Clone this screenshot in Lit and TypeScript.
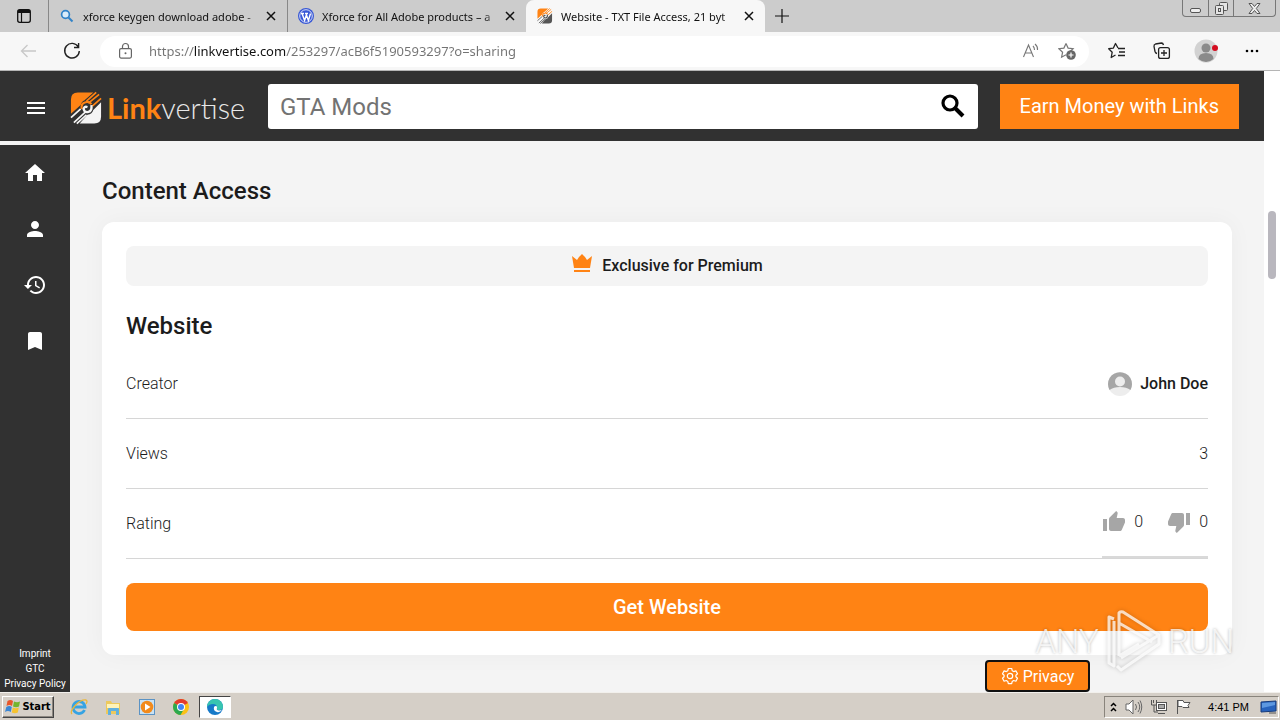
import { LitElement, html, css, svg } from "lit";
import { customElement, property } from "lit/decorators.js";

const linkMark = (light: string) => svg`
  <path fill="#ff8314" d="M8 1h16L15 9q-3 1-4 5L1 23V8q0-7 7-7z"/>
  <path fill=${light} d="M32 11v15q0 7-7 7H10l8-9q5-1 6-5z"/>
  <path d="M1 27l10-9M4 32l12-11M7 33l10-9" stroke=${light} stroke-width="1.800" fill="none"/>
  <path d="M27 1l-10 9M30 3L19 12M32 7l-9 8" stroke="#ff8314" stroke-width="1.800" fill="none"/>
  <path d="M12 18q-1-6 4-7 4-1 6 2" stroke="#ff8314" stroke-width="2.200" fill="none"/>
  <path d="M22 14q1 6-3 7-4 1-5-3 1-3 4-2" stroke=${light} stroke-width="2.400" fill="none"/>`;

@customElement("browser-tabs")
class BrowserTabs extends LitElement {
  static styles = css`
    :host { display: flex; height: 32px; background: #ccc; font: 11px "Noto Sans", sans-serif; color: #111; }
    button { border: 0; background: none; padding: 0; margin: 0; font: inherit; color: inherit; display: flex; align-items: center; justify-content: center; }
    .menu { width: 48px; }
    .strip { display: flex; }
    .tab { display: flex; align-items: center; width: 239px; box-sizing: border-box; padding: 0 6px 0 10px; border-left: 1px solid #888; gap: 8px; }
    .tab.active { background: #f7f7f7; border-color: transparent; border-radius: 8px 8px 0 0; }
    .title { flex: 1; min-width: 0; justify-content: flex-start; white-space: nowrap; height: 24px;
      -webkit-mask-image: linear-gradient(to right, #000 160px, transparent 182px); mask-image: linear-gradient(to right, #000 160px, transparent 182px); }
    .icon { width: 16px; height: 16px; flex: none; }
    .close { width: 20px; height: 20px; flex: none; }
    .add { width: 34px; }
    .win { margin: 0 4px 0 auto; display: flex; height: 17px; box-sizing: border-box; border: 1px solid #777; border-top: 0; border-radius: 0 0 4px 4px; }
    .win button { width: 25px; }
    .win button + button { border-left: 1px solid #777; }
    .win .x { width: 42px; }
  `;
  private close() {
    return html`<button class="close" aria-label="Close tab"><svg width="10" height="10" viewBox="0 0 10 10"><path d="M1 1l8 8M9 1L1 9" stroke="#111" stroke-width="1.5"/></svg></button>`;
  }
  render() {
    return html`
      <button class="menu" aria-label="Tab actions"><svg width="16" height="16" viewBox="0 0 16 16"><rect x="1.7" y="1.7" width="12.6" height="12.6" rx="2" fill="none" stroke="#111" stroke-width="1.3"/><path d="M2 2h12v3H2z" fill="#111"/><path d="M5.5 4v10" stroke="#111" stroke-width="1.2"/></svg></button>
      <div class="strip">
        <div class="tab">
          <svg class="icon" viewBox="0 0 16 16"><circle cx="6.5" cy="6.5" r="3.9" fill="#d9ecfa" stroke="#3183c8" stroke-width="1.7"/><path d="M9.5 9.5l4 4" stroke="#3183c8" stroke-width="2"/></svg>
          <button class="title">xforce keygen download adobe -</button>${this.close()}
        </div>
        <div class="tab">
          <svg class="icon" viewBox="0 0 16 16"><circle cx="8" cy="8" r="8" fill="#3858d6"/><circle cx="8" cy="8" r="6.3" fill="none" stroke="#fff" stroke-width=".8"/><path d="M3 5.5h3M7 5.5h3M4 5.5l2.6 7L8.4 7l2 5.500L12.500 5.500" stroke="#fff" stroke-width="1.400" fill="none"/></svg>
          <button class="title">Xforce for All Adobe products – a</button>${this.close()}
        </div>
        <div class="tab active">
          <svg class="icon" viewBox="0 0 34 34">${linkMark("#555")}</svg>
          <button class="title">Website - TXT File Access, 21 byt</button>${this.close()}
        </div>
      </div>
      <button class="add" aria-label="New tab"><svg width="14" height="14" viewBox="0 0 14 14"><path d="M7 0v14M0 7h14" stroke="#111" stroke-width="1.2"/></svg></button>
      <div class="win">
        <button aria-label="Minimize"><svg width="13" height="13" viewBox="0 0 13 13"><rect x="1.500" y="6.500" width="10" height="4" rx="1.500" fill="#eee" stroke="#555"/></svg></button>
        <button aria-label="Restore"><svg width="13" height="13" viewBox="0 0 13 13" fill="#e4e4e4" stroke="#555"><rect x="4.500" y=".5" width="8" height="8" rx="1"/><rect x=".5" y="3.500" width="8" height="9" rx="1"/><rect x="3.500" y="6.500" width="2" height="3"/></svg></button>
        <button class="x" aria-label="Close"><svg width="13" height="11" viewBox="0 0 13 11"><path d="M1 .5h3l2.500 3 2.500-3h3L8.300 5.500l3.700 5H9l-2.500-3-2.500 3H1l3.700-5z" fill="#eee" stroke="#555"/></svg></button>
      </div>`;
  }
}

@customElement("address-bar")
class AddressBar extends LitElement {
  static styles = css`
    :host { display: flex; align-items: center; height: 39px; box-sizing: border-box; background: #f7f7f7; border-bottom: 1px solid #b5b5b5; padding: 0 18px; }
    button { border: 0; background: none; padding: 0; display: flex; align-items: center; justify-content: center; height: 24px; width: 20px; }
    .reload { margin-left: 24px; }
    .field { flex: 1; display: flex; align-items: center; height: 31px; margin: 0 18px; padding: 0 12px 0 18px; border-radius: 16px; background: #fff; box-sizing: border-box; gap: 16px; }
    input { flex: 1; min-width: 0; border: 0; padding: 0; outline: 0; font: 13px "Noto Sans", sans-serif; height: 24px;
      background: linear-gradient(to right, #737373 45px, #111 45px, #111 137px, #737373 137px); -webkit-background-clip: text; background-clip: text; -webkit-text-fill-color: transparent; }
    .tools { display: flex; align-items: center; gap: 25px; }
  `;
  render() {
    return html`
      <button aria-label="Back"><svg width="17" height="14" viewBox="0 0 17 14"><path d="M7.500 1L1.500 7l6 6M1.500 7H16" fill="none" stroke="#c8c8c8" stroke-width="1.300"/></svg></button>
      <button class="reload" aria-label="Reload"><svg width="18" height="18" viewBox="0 0 18 18"><path d="M15.300 5A7.300 7.300 0 1 0 16.300 9M15.600 1v4.500H11" fill="none" stroke="#222" stroke-width="1.400"/></svg></button>
      <div class="field">
        <svg width="15" height="18" viewBox="0 0 15 18"><rect x="1.600" y="6.600" width="11.800" height="9.500" rx="1.500" fill="none" stroke="#666" stroke-width="1.200"/><path d="M4.500 6V4.500a3 3 0 0 1 6 0V6" fill="none" stroke="#666" stroke-width="1.200"/><circle cx="7.500" cy="11.300" r="1" fill="#666"/></svg>
        <input aria-label="Address" .value=${"https://linkvertise.com/253297/acB6f5190593297?o=sharing"} />
        <button aria-label="Read aloud"><svg width="18" height="18" viewBox="0 0 18 18"><path d="M1.500 15L6.500 3l5 12M3.200 11h6.600M11 4q1.500 1.500 1.500 4M13 2q3 2.500 2.500 6" fill="none" stroke="#777" stroke-width="1.100"/></svg></button>
        <button aria-label="Add to favorites"><svg width="19" height="19" viewBox="0 0 19 19"><path d="M8 1.500l2.100 4.600 5 .6-3.700 3.500M8 1.500L5.900 6.100l-5 .6 3.700 3.500-1 5L8 12.800" fill="none" stroke="#777" stroke-width="1.200"/><circle cx="13" cy="13" r="4.800" fill="#666"/><path d="M13 10.500v5M10.500 13h5" stroke="#fff" stroke-width="1.200"/></svg></button>
      </div>
      <div class="tools">
        <button aria-label="Favorites"><svg width="18" height="18" viewBox="0 0 18 18"><path d="M10 6L7.500 1.500 5.400 6.100l-4.700.6 3.500 3.500-1 5.300L7.500 13M10 6.500h7M11 10h6M10 13.500h7" fill="none" stroke="#222" stroke-width="1.300" stroke-linejoin="round"/></svg></button>
        <button aria-label="Collections"><svg width="18" height="18" viewBox="0 0 18 18"><path d="M4 11.500q-1.500-.3-2-2L1 4.500q-.2-2 1.500-2.500l6-1q1.500 0 2 2" fill="none" stroke="#222" stroke-width="1.300"/><rect x="5.600" y="5.600" width="10.800" height="10.800" rx="2" fill="#f7f7f7" stroke="#222" stroke-width="1.300"/><path d="M11 8v6M8 11h6" stroke="#222" stroke-width="1.300"/></svg></button>
        <button aria-label="Profile"><svg width="24" height="24" viewBox="1 0 24 24" overflow="visible"><circle cx="12" cy="12" r="11.500" fill="#d2d2d2"/><circle cx="12" cy="9" r="4.500" fill="#8a8a8a"/><path d="M4.500 20q0-6 7.500-6t7.500 6q-7.500 6-15 0z" fill="#8a8a8a"/><circle cx="21" cy="9" r="3" fill="#d40d20"/></svg></button>
        <button aria-label="Settings and more"><svg width="16" height="4" viewBox="0 0 16 4"><circle cx="3" cy="2" r="1.300"/><circle cx="8" cy="2" r="1.300"/><circle cx="13" cy="2" r="1.300"/></svg></button>
      </div>`;
  }
}

@customElement("site-header")
class SiteHeader extends LitElement {
  static styles = css`
    :host { display: flex; align-items: center; height: 70px; background: #313131; padding: 0 25px 0 24px; font-family: Roboto, sans-serif; }
    button { border: 0; padding: 0; background: none; display: flex; align-items: center; justify-content: center; font-family: inherit; }
    .menu { padding-top: 4px; }
    .logo { display: flex; align-items: center; margin: 4px 21px 0 22px; text-decoration: none; gap: 4px; font: 300 29px Lato, sans-serif; line-height: 34px; color: #e8e8e8; width: 177px; white-space: nowrap; }
    .logo b { color: #ff8314; font-weight: 700; }
    .search { flex: 1; min-width: 0; display: flex; height: 45px; box-sizing: border-box; background: #fff; border-radius: 3px; padding: 2px 11px 0 12px; }
    input { flex: 1; min-width: 0; border: 0; outline: 0; padding: 0; background: none; font: 24px Roboto, sans-serif; }
    input::placeholder { color: #737373; opacity: 1; }
    .earn { height: 45px; margin-left: 22px; padding: 0 20px; background: #ff8314; color: #fff; font-size: 20px; line-height: 24px; }
  `;
  render() {
    return html`
      <button class="menu" aria-label="Menu"><svg width="24" height="24" viewBox="0 0 24 24" fill="#fff"><path d="M3 18h18v-2H3v2zm0-5h18v-2H3v2zm0-7v2h18V6H3z"/></svg></button>
      <a class="logo" href="#" aria-label="Linkvertise"><svg width="33" height="34" viewBox="0 0 34 34">${linkMark("#f4f4f4")}</svg><span><b>Link</b>vertise</span></a>
      <form class="search" role="search">
        <input type="text" aria-label="Search" placeholder="GTA Mods" />
        <button type="button" aria-label="Search"><svg width="28" height="28" viewBox="0 0 28 28" fill="none" stroke="#000"><circle cx="11" cy="10" r="7" stroke-width="3.200"/><path d="M16 15l8 8" stroke-width="4"/></svg></button>
      </form>
      <button class="earn">Earn Money with Links</button>`;
  }
}

@customElement("side-nav")
class SideNav extends LitElement {
  static styles = css`
    :host { display: flex; flex-direction: column; width: 70px; flex: none; box-sizing: border-box; margin-top: 4px; background: #313131; font: 10px Roboto, sans-serif; }
    a { color: #fff; text-decoration: none; display: flex; justify-content: center; align-items: center; }
    .item { height: 56px; }
    .legal { margin-top: auto; line-height: 15px; padding-bottom: 1px; white-space: nowrap; }
  `;
  render() {
    const items = [
      ["Home", "M10 20v-6h4v6h5v-8h3L12 3 2 12h3v8z"],
      ["Profile", "M12 12c2.210 0 4-1.790 4-4s-1.790-4-4-4-4 1.790-4 4 1.790 4 4 4zm0 2c-2.670 0-8 1.340-8 4v2h16v-2c0-2.660-5.330-4-8-4z"],
      ["History", "M13 3c-4.970 0-9 4.030-9 9H1l3.890 3.890.07.14L9 12H6c0-3.870 3.130-7 7-7s7 3.130 7 7-3.130 7-7 7c-1.930 0-3.680-.79-4.940-2.060l-1.420 1.420C8.270 19.990 10.510 21 13 21c4.970 0 9-4.030 9-9s-4.030-9-9-9zm-1 5v5l4.280 2.540.72-1.210-3.500-2.080V8H12z"],
      ["Bookmarks", "M17 3H7c-1.100 0-1.990.9-1.990 2L5 21l7-3 7 3V5c0-1.100-.9-2-2-2z"],
    ];
    return html`
      ${items.map(([name, d]) => html`<a class="item" href="#" aria-label=${name}><svg width="24" height="24" viewBox="0 0 24 24" fill="#fff"><path d=${d} /></svg></a>`)}
      <div class="legal"><a href="#">Imprint</a><a href="#">GTC</a><a href="#">Privacy Policy</a></div>`;
  }
}

@customElement("info-row")
class InfoRow extends LitElement {
  @property() label = "";
  static styles = css`
    :host { display: flex; justify-content: space-between; align-items: center; height: 70px; box-sizing: border-box; border-bottom: 1px solid #d6d6d6; font-size: 16px; font-weight: 300; }
  `;
  render() {
    return html`<span>${this.label}</span><slot></slot>`;
  }
}

@customElement("content-access")
class ContentAccess extends LitElement {
  static styles = css`
    :host { display: block; flex: 1; min-width: 0; padding: 34px 32px; color: #1c1c1c; font-family: Roboto, sans-serif; }
    h1, h2 { margin: 0; font-size: 24px; font-weight: 500; line-height: 32px; }
    h1 { margin-bottom: 15px; }
    .card { background: #fff; border-radius: 12px; padding: 24px; box-shadow: 0 0 24px rgba(0, 0, 0, 0.04); }
    .premium { height: 40px; box-sizing: border-box; padding-bottom: 2px; border-radius: 8px; background: #f4f4f4; display: flex; align-items: center; justify-content: center; gap: 9px; font-size: 16px; font-weight: 500; }
    .premium svg { margin-bottom: 4px; }
    h2 { padding: 24px 0 7px; }
    .creator, .votes, .vote { display: flex; align-items: center; gap: 8px; }
    .creator { font-weight: 500; }
    .votes { gap: 24px; align-self: stretch; padding-bottom: 2px; border-bottom: 2px solid #d9d9d9; }
    .vote { border: 0; background: none; padding: 0; font: inherit; color: inherit; }
    .get { display: block; width: 100%; height: 48px; margin-top: 24px; border: 0; border-radius: 8px; background: #ff8314; color: #fff; font: 500 20px Roboto, sans-serif; }
  `;
  render() {
    return html`
      <h1>Content Access</h1>
      <section class="card">
        <div class="premium"><svg width="22" height="20" viewBox="0 0 22 20" fill="#ff8314"><path d="M1 3l5 4 2-3 3-3 3 3 2 3 5-4-2 12H3zM3 17h16v2H3z"/></svg>Exclusive for Premium</div>
        <h2>Website</h2>
        <info-row label="Creator"><span class="creator"><svg width="24" height="24" viewBox="0 0 24 24"><circle cx="12" cy="12" r="12" fill="#ededed"/><path d="M1.500 18a12 12 0 1 1 21 0q-4-3-10.500-3t-10.500 3z" fill="#a6a6a6"/><circle cx="12" cy="9.500" r="5" fill="#ededed"/></svg>John Doe</span></info-row>
        <info-row label="Views"><span>3</span></info-row>
        <info-row label="Rating"><span class="votes">
          <button class="vote" aria-label="Like, 0"><svg width="24" height="24" viewBox="0 0 24 24" fill="#a6a6a6"><path d="M1 21h4V9H1v12zm22-11c0-1.100-.9-2-2-2h-6.310l.95-4.570.03-.32c0-.41-.17-.79-.44-1.060L14.170 1 7.590 7.590C7.220 7.950 7 8.450 7 9v10c0 1.100.9 2 2 2h9c.83 0 1.540-.5 1.840-1.220l3.020-7.050c.09-.23.14-.47.14-.73v-2z"/></svg>0</button>
          <button class="vote" aria-label="Dislike, 0"><svg width="24" height="24" viewBox="0 0 24 24" fill="#a6a6a6"><path d="M15 3H6c-.83 0-1.540.5-1.840 1.220l-3.020 7.050c-.09.23-.14.47-.14.73v2c0 1.100.9 2 2 2h6.310l-.95 4.570-.03.32c0 .41.17.79.44 1.060L9.830 23l6.590-6.590c.36-.36.58-.86.58-1.410V5c0-1.100-.9-2-2-2zm4 0v12h4V3h-4z"/></svg>0</button>
        </span></info-row>
        <button class="get">Get Website</button>
      </section>`;
  }
}

@customElement("task-bar")
class TaskBar extends LitElement {
  static styles = css`
    :host { display: flex; align-items: center; height: 28px; box-sizing: border-box; background: #d5cfc7; border-top: 1px solid #f2f0ec; padding: 0 1px 0 2px; font: 11px "Liberation Sans", sans-serif; color: #000; }
    button { border: 0; background: none; padding: 0; display: flex; align-items: center; justify-content: center; }
    .start { width: 52px; height: 22px; gap: 1px; border: 1px solid; border-color: #fff #444 #444 #fff; font: 700 11px "DejaVu Sans Condensed", "DejaVu Sans", sans-serif; box-shadow: inset -1px -1px #8c8780; }
    .apps { display: flex; gap: 2px; margin-left: 9px; }
    .apps button { width: 32px; height: 22px; box-sizing: border-box; }
    .apps .on { background: #fff; border: 1px solid; border-color: #444 #fff #fff #444; }
    .tray { margin-left: auto; display: flex; align-items: center; height: 22px; padding: 0 0 0 4px; border: 1px solid; border-color: #89847c #fff #fff #89847c; box-sizing: border-box; gap: 7px; }
    .clock { margin: 0 4px 0 8px; }
  `;
  render() {
    return html`
      <button class="start"><svg width="16" height="15" viewBox="0 0 16 15"><path d="M2.500 2q3-2 5.500 0L7 7Q4.500 5 1.500 7z" fill="#e8562a"/><path d="M9 2.500q3 1.500 6 0l-1 5q-3 1.500-6 0z" fill="#74b52d"/><path d="M1.300 8q3-2 5.500 0l-1 5Q3 11 0 13z" fill="#3a86d4"/><path d="M7.800 8.500q3 1.500 6 0l-1 5q-3 1.500-6 0z" fill="#f6c330"/></svg>Start</button>
      <div class="apps">
        <button aria-label="Internet Explorer"><svg width="18" height="18" viewBox="0 0 18 18" fill="none"><path d="M14.500 12A6 6 0 1 1 15 9H4" stroke="#35a3e3" stroke-width="2.800"/><path d="M2 16C-1 13 9 1 16 2q2 1 0 4" stroke="#eab73a" stroke-width="1.300"/></svg></button>
        <button aria-label="Explorer"><svg width="18" height="18" viewBox="0 0 18 18"><path d="M2 3h5l1 2h8v11H2z" fill="#edc95c"/><path d="M3 6h12v4H3z" fill="#fff3b8"/><path d="M4 17v-6q0-1 1-1h9q1 0 1 1v6h-3v-4H7v4z" fill="#61b0de"/></svg></button>
        <button aria-label="Media Player"><svg width="18" height="18" viewBox="0 0 18 18"><rect x="1.500" y="1.500" width="15" height="15" fill="#c9e2f4" stroke="#5b93c4"/><circle cx="9" cy="9" r="6.300" fill="#f28a1b"/><path d="M7 5.500l5.500 3.500L7 12.500z" fill="#fff"/></svg></button>
        <button aria-label="Chrome"><svg width="18" height="18" viewBox="0 0 18 18"><circle cx="9" cy="9" r="8" fill="#fbc116"/><path d="M9 9L2.100 5A8 8 0 0 1 15.900 5z" fill="#e33b2e"/><path d="M9 9L2.100 5A8 8 0 0 0 8.500 17l3.500-6z" fill="#2da94f"/><circle cx="9" cy="9" r="4" fill="#fff"/><circle cx="9" cy="9" r="3" fill="#4285f4"/></svg></button>
        <button class="on" aria-label="Edge"><svg width="18" height="18" viewBox="0 0 18 18"><circle cx="9" cy="9" r="8" fill="#1679c8"/><path d="M1 9A8 8 0 0 1 17 9q0 3-4 3-3 0-2-2 0-4-4-4-4 0-6 3z" fill="#38c5b0"/><path d="M11 10q-1 2 2 2.500 2 0 3-.7-2 3-5 2.200-4-1-3-5 1-1.500 3-.5z" fill="#fff"/></svg></button>
      </div>
      <div class="tray">
        <svg width="9" height="12" viewBox="0 0 9 12" fill="none" stroke="#000" stroke-width="1.500"><path d="M2 5l2.500-2.500L7 5M2 10l2.500-2.500L7 10"/></svg>
        <svg width="18" height="16" viewBox="0 0 18 16" fill="#fff" stroke="#666"><path d="M1 5h3l4-4v14l-4-4H1z"/><path d="M10.500 5q2 3 0 6M13 3q3.500 5 0 10M15 1.500q3.500 6.500 0 13" fill="none"/></svg>
        <svg width="18" height="16" viewBox="0 0 18 16" fill="#fff" stroke="#555"><rect x="6.500" y="3.500" width="10" height="8"/><rect x="8.500" y="5.500" width="6" height="4" fill="#aaa"/><path d="M8 14.500h7M1.500 1v5h5V1M3.500 1v3M4 6v7h4" fill="none"/></svg>
        <svg width="18" height="16" viewBox="0 0 18 16" fill="#fff" stroke="#555"><path d="M2.500 15V1M3 1.500h5l1 2h6l-2 3 1 2H8l-1-1H3z"/></svg>
        <span class="clock">4:41 PM</span>
        <svg width="18" height="16" viewBox="0 0 18 16"><path d="M1 3l15-1v10l-15 1z" fill="#2763bd" stroke="#173b7a"/><path d="M2 4l13-1v3L2 9z" fill="#5d98e0"/><path d="M9 14h7" stroke="#555"/></svg>
      </div>`;
  }
}

@customElement("app-root")
class AppRoot extends LitElement {
  static styles = css`
    :host { display: flex; flex-direction: column; height: 100vh; overflow: hidden; background: #f4f4f4; }
    browser-tabs, address-bar, task-bar { flex: none; }
    .view { flex: 1; min-height: 0; display: flex; position: relative; }
    .page { flex: 1; min-width: 0; display: flex; flex-direction: column; }
    .body { flex: 1; min-height: 0; display: flex; }
    .scroll { width: 16px; flex: none; background: #fff; }
    .thumb { width: 8px; height: 68px; margin: 140px auto 0; border-radius: 4px; background: #b9b7be; }
    .privacy { position: absolute; right: 190px; bottom: 0; box-sizing: border-box; display: flex; align-items: center; justify-content: center; gap: 4px; width: 105px; height: 32px; padding: 0; border: 2px solid #111; border-radius: 4px; background: #ff8314; color: #fff; font: 16px Roboto, sans-serif; }
    .mark { position: absolute; right: 46px; bottom: 20px; display: flex; align-items: center; gap: 6px; pointer-events: none; font: 300 33px Roboto, sans-serif; color: rgba(255, 255, 255, 0.75); text-shadow: 0 0 3px rgba(0, 0, 0, 0.3); }
    .mark svg { filter: drop-shadow(0 0 2px rgba(0, 0, 0, 0.25)); }
  `;
  render() {
    return html`
      <browser-tabs></browser-tabs>
      <address-bar></address-bar>
      <div class="view">
        <div class="page">
          <site-header></site-header>
          <div class="body"><side-nav></side-nav><content-access></content-access></div>
        </div>
        <div class="scroll"><div class="thumb"></div></div>
        <button class="privacy"><svg width="18" height="18" viewBox="0 0 18 18" fill="none" stroke="#fff" stroke-width="1.200" stroke-linejoin="round"><path d="M7.300 1.500h3.400l.5 2.200 1.500.9 2.200-.7 1.600 2.900-1.600 1.500v1.500l1.600 1.500-1.600 2.900-2.200-.7-1.500.9-.5 2.200H7.300l-.5-2.200-1.500-.9-2.200.7-1.600-2.900 1.600-1.500V8.300L1.500 6.800l1.600-2.900 2.200.7 1.500-.9z"/><circle cx="9" cy="9" r="2.700"/></svg>Privacy</button>
        <div class="mark"><span>ANY</span><svg width="57" height="62" viewBox="0 0 57 62" fill="none" stroke="#fff" stroke-opacity=".75" stroke-width="3" stroke-linejoin="round"><path d="M9 9l-5-2v46l5 3V11M14 46V3q1-2 4-1l36 23-38 23M14 13l33 19M14 46l20-12M12 56l4 4 38-26v-8"/></svg><span>RUN</span></div>
      </div>
      <task-bar></task-bar>`;
  }
}
